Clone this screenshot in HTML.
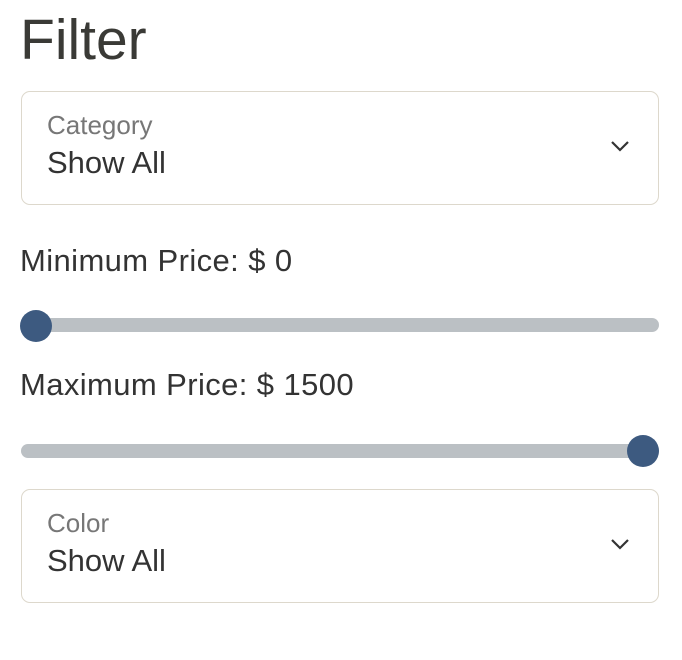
<!DOCTYPE html>
<html><head><style>
body{margin:0;background:#fff;font-family:"Liberation Sans",Arial,sans-serif;width:682px;height:660px;position:relative;overflow:hidden}
.a{position:absolute;white-space:nowrap}
.box{position:absolute;left:21px;width:636px;height:112px;border:1.5px solid #ddd8cc;border-radius:9px}
.lab{position:absolute;left:25px;top:18px;font-size:26px;color:#777}
.val{position:absolute;left:25px;top:53px;font-size:31px;color:#333}
.chev{position:absolute;right:28px;top:47px}
.track{position:absolute;left:21px;width:638px;height:14px;border-radius:7px;background:#bbc0c4}
.thumb{position:absolute;width:32px;height:32px;border-radius:50%;background:#3d5a80}
</style></head><body>
<div class="a" style="left:20px;top:7px;font-size:57px;color:#3a3a36">Filter</div>
<div class="box" style="top:91px"><div class="lab">Category</div><div class="val">Show All</div>
<svg class="chev" width="20" height="14" viewBox="0 0 20 14"><path d="M2 3 L10 11 L18 3" fill="none" stroke="#333" stroke-width="2.2"/></svg></div>
<div class="a" style="left:20px;top:243px;font-size:31px;color:#333;letter-spacing:0.4px">Minimum Price: $ 0</div>
<div class="track" style="top:318px"></div><div class="thumb" style="left:20px;top:310px"></div>
<div class="a" style="left:20px;top:367px;font-size:31px;color:#333;letter-spacing:0.4px">Maximum Price: $ 1500</div>
<div class="track" style="top:444px"></div><div class="thumb" style="left:627px;top:435px"></div>
<div class="box" style="top:489px"><div class="lab">Color</div><div class="val">Show All</div>
<svg class="chev" width="20" height="14" viewBox="0 0 20 14"><path d="M2 3 L10 11 L18 3" fill="none" stroke="#333" stroke-width="2.2"/></svg></div>
</body></html>
